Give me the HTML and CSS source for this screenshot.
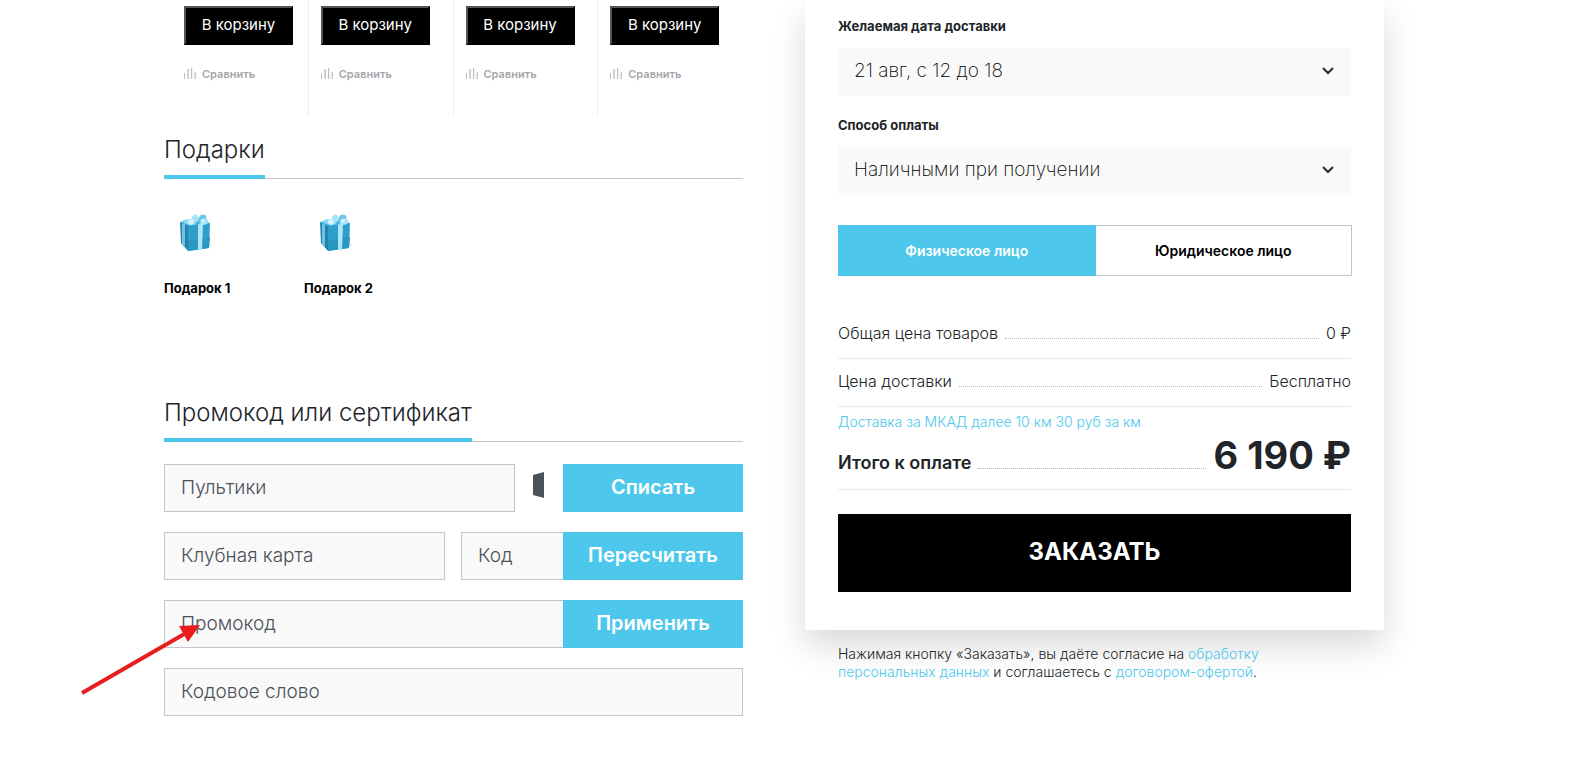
FILE: index.html
```
<!DOCTYPE html>
<html lang="ru">

<head>
  <meta charset="UTF-8">
  <meta name="viewport" content="width=device-width, initial-scale=1.0">
  <title>Оформление заказа</title>
  <link rel="stylesheet" href="styles.css">
</head>

<body>
  <!-- общие иконки -->
  <svg class="sprite" aria-hidden="true">
    <symbol id="icon-compare" viewBox="0 0 12 12">
      <path d="M0 5h1v6H0zM3.4 1h1.4v10H3.4zM7 0h1.2v11H7zM10.6 4h1.2v7h-1.2z" fill="#bcbdc2" />
    </symbol>
    <symbol id="icon-arrow" viewBox="0 0 14 10">
      <path d="M2 2l5 5 5-5" fill="none" stroke="#262b38" stroke-width="2" />
    </symbol>
    <symbol id="icon-gift" viewBox="0 0 34 40">
      <path d="M29 34l4-4v2l-4 3z" fill="#e6e8ea" />
      <path d="M1 9l8 3v26l-7-8z" fill="#2583ad" />
      <path d="M3 10l3 1v23l-3-3z" fill="#6fc3e2" />
      <path d="M9 12l22-2-1 25-21 3z" fill="#2f9fca" />
      <path d="M9 27l22-3-1 11-21 3z" fill="#2a97c3" />
      <path d="M1 9l15-4 15 5-22 3z" fill="#45b0d8" />
      <path d="M19 11h5l-1 25-4 1z" fill="#aee6f9" />
      <path d="M18 11c-4-4-9-6-13-4s3 6 13 4z" fill="#8bd8f3" />
      <path d="M17 10c-5 0-6-6-2-8s5 3 4 8z" fill="#a6e3f8" />
      <path d="M19 10c0-7 3-10 7-8s0 7-7 8z" fill="#6cc8e9" />
      <path d="M18 11c4-6 10-7 11-3s-6 5-11 3z" fill="#a6e3f8" />
      <circle cx="12" cy="9" r="3" fill="#d2f3fd" />
      <circle cx="24" cy="8" r="2" fill="#d2f3fd" />
      <path d="M16 10l3-2 3 1-3 3z" fill="#48b4db" />
    </symbol>
  </svg>

  <main class="checkout">
    <section class="left">
      <div class="products">
        <div class="product">
          <button class="buy" type="button">В корзину</button>
          <a class="compare" href="#"><svg><use href="#icon-compare" /></svg>Сравнить</a>
        </div>
        <div class="product">
          <button class="buy" type="button">В корзину</button>
          <a class="compare" href="#"><svg><use href="#icon-compare" /></svg>Сравнить</a>
        </div>
        <div class="product">
          <button class="buy" type="button">В корзину</button>
          <a class="compare" href="#"><svg><use href="#icon-compare" /></svg>Сравнить</a>
        </div>
        <div class="product">
          <button class="buy" type="button">В корзину</button>
          <a class="compare" href="#"><svg><use href="#icon-compare" /></svg>Сравнить</a>
        </div>
      </div>

      <h2 class="title"><span>Подарки</span></h2>
      <div class="gifts">
        <div class="gift">
          <svg><use href="#icon-gift" /></svg>
          <p>Подарок 1</p>
        </div>
        <div class="gift">
          <svg><use href="#icon-gift" /></svg>
          <p>Подарок 2</p>
        </div>
      </div>

      <h2 class="title"><span>Промокод или сертификат</span></h2>
      <form class="promo">
        <div class="row">
          <input type="text" placeholder="Пультики" aria-label="Пультики">
          <span class="mark">
            <svg viewBox="0 0 12 26"><path d="M0 3l11-3v26L0 23z" fill="#4b525a" /></svg>
          </span>
          <button type="button">Списать</button>
        </div>
        <div class="row">
          <input class="card-number" type="text" placeholder="Клубная карта" aria-label="Клубная карта">
          <input class="code joined" type="text" placeholder="Код" aria-label="Код">
          <button type="button">Пересчитать</button>
        </div>
        <div class="row">
          <input class="joined" type="text" placeholder="Промокод" aria-label="Промокод">
          <button type="button">Применить</button>
          <svg class="pointer" viewBox="0 0 122 72">
            <path d="M2 69L106 9" stroke="#e81e1e" stroke-width="4" />
            <path d="M99 2l21-1-12 17z" fill="#e81e1e" />
          </svg>
        </div>
        <div class="row">
          <input type="text" placeholder="Кодовое слово" aria-label="Кодовое слово">
        </div>
      </form>
    </section>

    <section class="right">
      <form class="order">
        <label for="date">Желаемая дата доставки</label>
        <div class="select">
          <select id="date">
            <option>21 авг, с 12 до 18</option>
          </select>
          <svg><use href="#icon-arrow" /></svg>
        </div>
        <label for="pay">Способ оплаты</label>
        <div class="select">
          <select id="pay">
            <option>Наличными при получении</option>
          </select>
          <svg><use href="#icon-arrow" /></svg>
        </div>

        <div class="tabs">
          <button class="active" type="button">Физическое лицо</button>
          <button type="button">Юридическое лицо</button>
        </div>

        <div class="line">
          <span>Общая цена товаров</span>
          <i></i>
          <span>0 ₽</span>
        </div>
        <div class="line">
          <span>Цена доставки</span>
          <i></i>
          <span>Бесплатно</span>
        </div>
        <p class="note">Доставка за МКАД далее 10 км 30 руб за км</p>
        <div class="line total">
          <span>Итого к оплате</span>
          <i></i>
          <strong>6 190 ₽</strong>
        </div>

        <button class="submit" type="button">ЗАКАЗАТЬ</button>
      </form>
      <p class="agree">Нажимая кнопку «Заказать», вы даёте согласие на <a href="#">обработку персональных данных</a> и соглашаетесь с <a href="#">договором-офертой</a>.</p>
    </section>
  </main>
</body>

</html>
```
FILE: styles.css
```
* {
  box-sizing: border-box;
}

body {
  margin: 0;
  padding: 0 22px 0 0;
  background: #fff;
  color: #212529;
  font-family: Inter, "Liberation Sans", sans-serif;
  font-size: 16px;
}

button,
input,
select {
  font-family: inherit;
  border-radius: 0;
}

button {
  cursor: pointer;
}

a {
  color: #4dc7eb;
  text-decoration: none;
}

p {
  margin: 0;
}

.sprite {
  position: absolute;
  width: 0;
  height: 0;
}

.checkout {
  max-width: 1220px;
  margin: 0 auto;
  display: grid;
  grid-template-columns: repeat(2, minmax(0, 1fr));
  gap: 62px;
}

/* товары */
.products {
  display: grid;
  grid-template-columns: repeat(4, minmax(0, 1fr));
}

.product {
  height: 115px;
  padding: 6px 0 0 12px;
  border-right: 1px solid #ececec;
}

.product:first-child {
  padding-left: 20px;
}

.product:last-child {
  border-right: none;
}

.buy {
  display: block;
  width: 109px;
  height: 39px;
  padding: 0 0 2px;
  border: 2px outset #000;
  background: #000;
  color: #fff;
  font-size: 15px;
}

.compare {
  display: flex;
  align-items: center;
  margin-top: 22px;
  color: #a5a6aa;
  font-size: 11px;
  line-height: 14px;
  font-weight: 600;
}

.compare svg {
  width: 12px;
  height: 12px;
  margin-right: 6px;
}

.title {
  margin: 0;
  height: 64px;
  border-bottom: 1px solid #c4c5c9;
  font-size: 24px;
  line-height: 28px;
  font-weight: 300;
}

.title span {
  display: inline-block;
  height: 64px;
  padding-top: 21px;
  border-bottom: 4px solid #4dc7eb;
}

/* подарки */
.gifts {
  display: flex;
  height: 199px;
  padding-top: 34px;
}

.gift {
  width: 140px;
}

.gift svg {
  display: block;
  width: 34px;
  height: 40px;
  margin: 0 0 26px 15px;
}

.gift p {
  color: #000;
  font-size: 13px;
  line-height: 18px;
  font-weight: 700;
}

/* промокод */
.promo {
  display: flex;
  flex-direction: column;
  gap: 20px;
  padding-top: 22px;
}

.row {
  position: relative;
  display: flex;
}

.row input {
  flex: 1;
  min-width: 0;
  height: 48px;
  padding: 0 16px 2px;
  border: 1px solid #c4c5c9;
  background: #f9f9f9;
  font-size: 19px;
  font-weight: 300;
}

.row input::placeholder {
  color: #495057;
  opacity: 1;
}

.row .joined {
  border-right: none;
}

.row .card-number {
  margin-right: 16px;
}

.row .code {
  flex: none;
  width: 102px;
}

.row button {
  width: 180px;
  height: 48px;
  padding: 0 0 2px;
  border: none;
  background: #4dc7eb;
  color: #fff;
  font-size: 20px;
  font-weight: 600;
}

.mark {
  width: 48px;
  padding: 8px 0 0 18px;
}

.mark svg {
  display: block;
  width: 12px;
  height: 26px;
}

.pointer {
  position: absolute;
  left: -84px;
  top: 24px;
  width: 122px;
  height: 72px;
}

/* заказ */
.order {
  padding: 17px 33px 38px;
  background: #fff;
  box-shadow: 0 16px 32px rgba(0, 0, 0, 0.15);
}

.order label {
  display: block;
  margin-bottom: 13px;
  font-size: 13px;
  line-height: 18px;
  font-weight: 700;
}

.select {
  position: relative;
  margin-bottom: 20px;
}

.select select {
  display: block;
  width: 100%;
  height: 48px;
  padding: 0 40px 3px 16px;
  border: none;
  background: #f9f9f9;
  color: #000;
  font-size: 19px;
  font-weight: 200;
  appearance: none;
}

.select svg {
  position: absolute;
  right: 16px;
  top: 18px;
  width: 14px;
  height: 10px;
  pointer-events: none;
}

.tabs {
  display: flex;
  margin: 30px -1px 35px 0;
}

.tabs button {
  flex: 1;
  height: 51px;
  padding: 0;
  border: 1px solid #c4c5c9;
  background: #fff;
  color: #000;
  font-size: 14px;
  font-weight: 600;
}

.tabs .active {
  border-color: #4dc7eb;
  background: #4dc7eb;
  color: #fff;
}

.tabs .active + button {
  border-left: none;
}

.line {
  display: flex;
  align-items: baseline;
  height: 48px;
  padding-top: 10px;
  border-bottom: 1px solid #e9e9e9;
  line-height: 24px;
  font-weight: 300;
}

.line i {
  flex: 1;
  margin: 0 7px -2px;
  border-bottom: 1px dotted #b5b5b5;
}

.note {
  margin-top: 6px;
  color: #4dc7eb;
  font-size: 14px;
  line-height: 18px;
  font-weight: 300;
}

.total {
  height: 59px;
  padding-top: 0;
  font-size: 18px;
  font-weight: 600;
}

.total strong {
  font-size: 38px;
  line-height: 48px;
  font-weight: 700;
}

.submit {
  display: block;
  width: 100%;
  height: 78px;
  margin-top: 24px;
  padding: 0 0 3px;
  border: none;
  background: #000;
  color: #fff;
  font-size: 24px;
  font-weight: 700;
}

.agree {
  position: relative;
  max-width: 510px;
  padding: 15px 33px 0;
  font-size: 14px;
  line-height: 18px;
  font-weight: 300;
}
```
